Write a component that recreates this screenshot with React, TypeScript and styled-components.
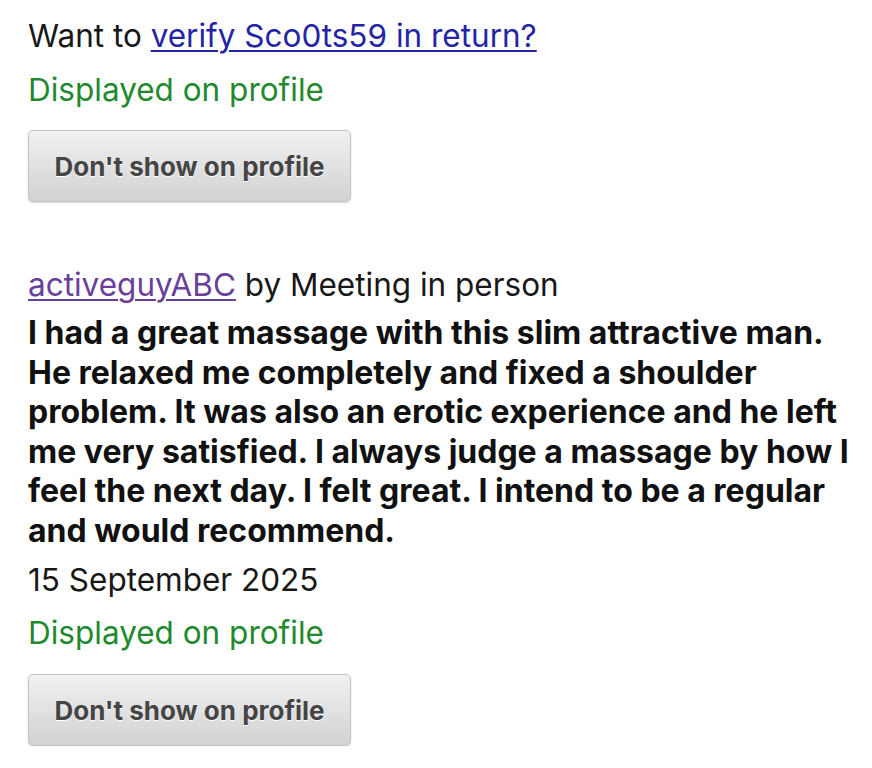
import styled, { createGlobalStyle } from "styled-components";

const GlobalStyle = createGlobalStyle`
    html, body {
        margin: 0;
        padding: 0;
        background: #fff;
    }
    body {
        font-family: Inter, "Noto Sans", sans-serif;
        color: #181818;
    }
`

type ReviewPropsType = {
    author: string
    method: string
    text: string
    date: string
}

const Review = (props: ReviewPropsType) => {
    return (
        <StyledReview>
            <ReviewHead>
                <VisitedLink href={"#"}>{props.author}</VisitedLink> by {props.method}
            </ReviewHead>
            <ReviewText>{props.text}</ReviewText>
            <ReviewDate>{props.date}</ReviewDate>
            <Status>Displayed on profile</Status>
            <HideButton type="button">Don't show on profile</HideButton>
        </StyledReview>
    );
};

export default function App() {
    return (
        <Page>
            <GlobalStyle/>
            <Section>
                <Line>
                    Want to <Link href={"#"}>verify Sco0ts59 in return?</Link>
                </Line>
                <Status>Displayed on profile</Status>
                <HideButton type="button">Don't show on profile</HideButton>
            </Section>
            <Review
                author={"activeguyABC"}
                method={"Meeting in person"}
                text={"I had a great massage with this slim attractive man. He relaxed me completely and fixed a shoulder problem. It was also an erotic experience and he left me very satisfied. I always judge a massage by how I feel the next day. I felt great. I intend to be a regular and would recommend."}
                date={"15 September 2025"}
            />
        </Page>
    );
}

const Page = styled.div`
    padding: 16px 14px 0 28px;
    width: 872px;
    box-sizing: border-box;
`

const Section = styled.div`
    display: flex;
    flex-direction: column;
    align-items: flex-start;
`

const Line = styled.p`
    margin: 0;
    font-size: 31.5px;
    line-height: 40px;
    color: #181818;
`

const Link = styled.a`
    color: #2424a4;
    text-decoration: underline;
    text-decoration-thickness: 2px;
    text-underline-offset: 3px;
`

const VisitedLink = styled.a`
    color: #6a3f9c;
    text-decoration: underline;
    text-decoration-thickness: 2px;
    text-underline-offset: 3px;
`

const Status = styled.p`
    margin: 14px 0 0 0;
    font-size: 31.5px;
    line-height: 40px;
    color: #22892e;
`

const HideButton = styled.button`
    margin-top: 20px;
    width: 323px;
    height: 72px;
    padding: 0;
    border: 1px solid #c4c4c4;
    border-radius: 5px;
    background: linear-gradient(#f1f1f1, #d2d2d2);
    box-shadow: 0 1px 2px rgba(0, 0, 0, 0.15);
    font-family: Inter, "Noto Sans", sans-serif;
    font-weight: 700;
    font-size: 26px;
    color: #454545;
    text-shadow: 0 1px 0 #fff;
    cursor: pointer;
`

const StyledReview = styled.div`
    margin-top: 63px;
    display: flex;
    flex-direction: column;
    align-items: flex-start;

    & > ${Status} {
        margin-top: 13px;
    }

    & > ${HideButton} {
        margin-top: 21px;
    }
`

const ReviewHead = styled.p`
    margin: 0;
    font-size: 31.5px;
    line-height: 40px;
    color: #181818;
`

const ReviewText = styled.p`
    margin: 8px 0 0 0;
    font-size: 32px;
    font-weight: 700;
    line-height: 39.5px;
    color: #111;
`

const ReviewDate = styled.p`
    margin: 10px 0 0 0;
    font-size: 31.5px;
    line-height: 40px;
    color: #181818;
`
